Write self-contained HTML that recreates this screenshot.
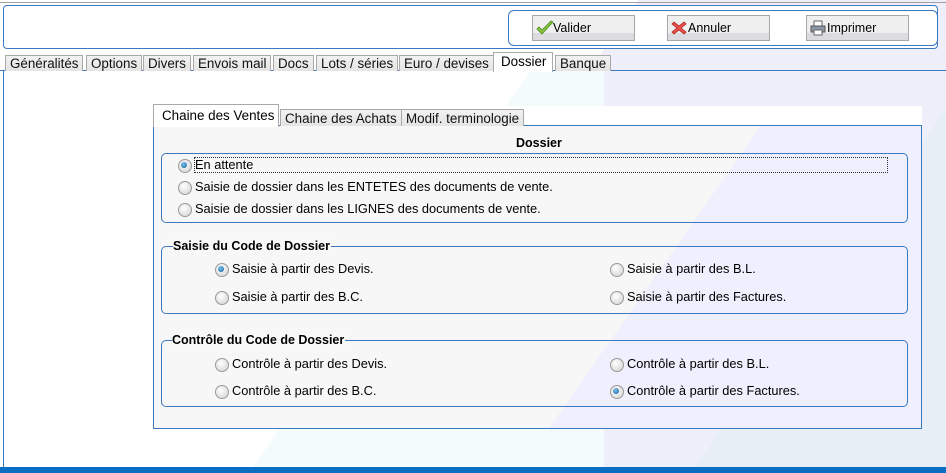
<!DOCTYPE html>
<html><head><meta charset="utf-8"><style>
*{box-sizing:border-box;margin:0;padding:0}
body{width:946px;height:473px;position:relative;overflow:hidden;font-family:"Liberation Sans",sans-serif;font-size:12px;color:#000;background:#fff}
.a{position:absolute}
.btn{position:absolute;top:15px;width:103px;height:26px;border:1px solid #a8a8a8;background:linear-gradient(#efefef 0,#efefef 70%,#dcdce0 70%);font-size:12.5px;line-height:24px;padding-left:20px}
.btn svg{position:absolute;left:3px;top:4px}
.tab{position:absolute;top:55px;height:16px;border:1px solid #a9a9a9;border-bottom:none;background:linear-gradient(#f2f2f2,#e4e4e4);font-size:13.4px;line-height:16px;padding:0 4px;color:#111}
.itab{position:absolute;top:109px;height:17px;border:1px solid #a9a9a9;border-bottom:none;background:linear-gradient(#f2f2f2,#e4e4e4);font-size:13.4px;line-height:18px;padding:0 4px;color:#111}
.grp{position:absolute;border:1px solid #3a78c0;border-radius:5px}
.gt{position:absolute;font-weight:bold;font-size:12.5px;line-height:14px;padding-right:1px;background:#f8f8f8}
.r{position:absolute;font-size:12.8px;line-height:14px;padding-left:17px;white-space:nowrap}
.r::before{content:"";position:absolute;left:0;top:1px;width:12px;height:12px;border-radius:50%;border:1px solid #9a9a9a;background:radial-gradient(circle at 40% 35%,#fff,#d0d0d0)}
.r.on::after{content:"";position:absolute;left:3px;top:4px;width:6px;height:6px;border-radius:50%;background:radial-gradient(circle at 40% 35%,#7fc4ee,#0a5a9a)}
</style></head><body>
<div class="a" style="left:0;top:0;width:946px;height:473px;background:linear-gradient(125deg,#fff 0,#fff 50%,#efeffc 50%,#efeffc 80%,#e8eef6 80%)"></div>
<div class="a" style="left:4px;top:71px;width:600px;height:396px;background:linear-gradient(125deg,#fff 0,#fff 60%,#f4fbfd 60%,#f4fbfd 100%)"></div>
<div class="a" style="left:0;top:2px;width:946px;height:1px;background:#a0a0a0"></div>
<div class="a" style="left:3px;top:5px;width:935px;height:44px;border:1px solid #3a78c0;border-radius:4px;background:#fff"></div>
<div class="a" style="left:508px;top:10px;width:430px;height:36px;border:1px solid #3a78c0;border-radius:6px;background:#fff"></div>
<div class="btn" style="left:532px"><svg width="18" height="16" viewBox="0 0 18 16"><path d="M1 9 L6 14 L17 2 L15 1 L6 10 L3 7 Z" fill="#8cc63f" stroke="#4a8a1a" stroke-width="0.8"/></svg>Valider</div>
<div class="btn" style="left:667px"><svg width="16" height="16" viewBox="0 0 16 16"><path d="M3 2 L8 6 L13 2 L15 4 L10 8 L15 12 L13 14 L8 10 L3 14 L1 12 L6 8 L1 4 Z" fill="#e8534a" stroke="#b02020" stroke-width="0.8"/></svg>Annuler</div>
<div class="btn" style="left:806px"><svg width="16" height="16" viewBox="0 0 16 16"><rect x="4" y="1" width="8" height="5" fill="#fff" stroke="#666"/><rect x="1" y="6" width="14" height="6" fill="#8a98a8" stroke="#555"/><rect x="4" y="10" width="8" height="5" fill="#fff" stroke="#666"/></svg>Imprimer</div>
<div class="a" style="left:0;top:70px;width:946px;height:1px;background:#3a78c0"></div>
<div class="a" style="left:3px;top:70px;width:1px;height:397px;background:#3a78c0"></div>
<div class="tab" style="left:5px">Généralités</div>
<div class="tab" style="left:86px">Options</div>
<div class="tab" style="left:143px">Divers</div>
<div class="tab" style="left:193px">Envois mail</div>
<div class="tab" style="left:273px">Docs</div>
<div class="tab" style="left:316px">Lots / séries</div>
<div class="tab" style="left:399px">Euro / devises</div>
<div class="a" style="left:493px;top:52px;width:60px;height:20px;border:1px solid #a9a9a9;border-bottom:none;background:#fff;font-size:13.4px;line-height:18px;padding-left:7px">Dossier</div>
<div class="tab" style="left:555px">Banque</div>
<div class="a" style="left:153px;top:106px;width:769px;height:20px;background:#fff"></div>
<div class="a" style="left:153px;top:125px;width:769px;height:304px;border:1px solid #3a78c0;background:linear-gradient(125deg,#f7f7f7 0,#f7f7f7 62%,#efeffd 62%)"></div>
<div class="a" style="left:153px;top:104px;width:126px;height:23px;border:1px solid #a9a9a9;border-bottom:none;background:#fff;font-size:13.4px;line-height:22px;padding-left:8px">Chaine des Ventes</div>
<div class="itab" style="left:280px">Chaine des Achats</div>
<div class="itab" style="left:401px">Modif. terminologie</div>
<div class="a" style="left:516px;top:136px;font-weight:bold;font-size:12.5px">Dossier</div>
<div class="grp" style="left:161px;top:153px;width:747px;height:70px"></div>
<div class="a" style="left:194px;top:157px;width:694px;height:16px;border:1px dotted #333"></div>
<div class="r on" style="left:178px;top:158px">En attente</div>
<div class="r" style="left:178px;top:180px">Saisie de dossier dans les ENTETES des documents de vente.</div>
<div class="r" style="left:178px;top:202px">Saisie de dossier dans les LIGNES des documents de vente.</div>
<div class="grp" style="left:161px;top:246px;width:747px;height:68px"></div>
<div class="gt" style="left:173px;top:239px">Saisie du Code de Dossier</div>
<div class="r on" style="left:215px;top:262px">Saisie à partir des Devis.</div>
<div class="r" style="left:215px;top:290px">Saisie à partir des B.C.</div>
<div class="r" style="left:610px;top:262px">Saisie à partir des B.L.</div>
<div class="r" style="left:610px;top:290px">Saisie à partir des Factures.</div>
<div class="grp" style="left:161px;top:340px;width:747px;height:67px"></div>
<div class="gt" style="left:172px;top:333px">Contrôle du Code de Dossier</div>
<div class="r" style="left:215px;top:357px">Contrôle à partir des Devis.</div>
<div class="r" style="left:215px;top:384px">Contrôle à partir des B.C.</div>
<div class="r" style="left:610px;top:357px">Contrôle à partir des B.L.</div>
<div class="r on" style="left:610px;top:384px">Contrôle à partir des Factures.</div>
<div class="a" style="left:0;top:467px;width:946px;height:6px;background:#0a6fc2"></div>
</body></html>
